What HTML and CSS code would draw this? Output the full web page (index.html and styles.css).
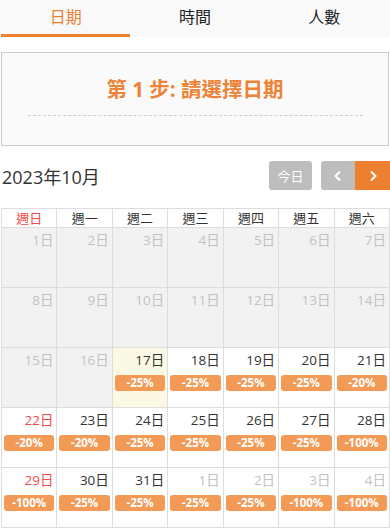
FILE: index.html
```html
<!DOCTYPE html>
<html lang="zh-Hant">
<head>
  <meta charset="UTF-8">
  <meta name="viewport" content="width=device-width, initial-scale=1.0">
  <title>預約 - 選擇日期</title>
  <link rel="stylesheet" href="styles.css">
</head>
<body>
  <!-- Step tabs -->
  <div class="tabs">
    <div class="tab active">日期</div>
    <div class="tab">時間</div>
    <div class="tab">人數</div>
  </div>

  <!-- Step title -->
  <div class="step-box">
    <h2 class="step-title">第 1 步: 請選擇日期</h2>
    <div class="step-line"></div>
  </div>

  <!-- Calendar toolbar -->
  <div class="cal-toolbar">
    <div class="cal-month">2023年10月</div>
    <div class="cal-buttons">
      <div class="btn btn-today">今日</div>
      <div class="btn-group">
        <div class="btn btn-prev">
          <svg width="10" height="12" viewBox="0 0 10 12"><path d="M7 1.5 L2.5 6 L7 10.5" fill="none" stroke="#fff" stroke-width="2"/></svg>
        </div>
        <div class="btn btn-next">
          <svg width="10" height="12" viewBox="0 0 10 12"><path d="M3 1.5 L7.5 6 L3 10.5" fill="none" stroke="#fff" stroke-width="2"/></svg>
        </div>
      </div>
    </div>
  </div>

  <!-- Calendar grid -->
  <table class="calendar">
    <thead>
      <tr>
        <th class="sun">週日</th><th>週一</th><th>週二</th><th>週三</th><th>週四</th><th>週五</th><th>週六</th>
      </tr>
    </thead>
    <tbody>
      <tr>
        <td class="past"><div class="day">1日</div></td>
        <td class="past"><div class="day">2日</div></td>
        <td class="past"><div class="day">3日</div></td>
        <td class="past"><div class="day">4日</div></td>
        <td class="past"><div class="day">5日</div></td>
        <td class="past"><div class="day">6日</div></td>
        <td class="past"><div class="day">7日</div></td>
      </tr>
      <tr>
        <td class="past"><div class="day">8日</div></td>
        <td class="past"><div class="day">9日</div></td>
        <td class="past"><div class="day">10日</div></td>
        <td class="past"><div class="day">11日</div></td>
        <td class="past"><div class="day">12日</div></td>
        <td class="past"><div class="day">13日</div></td>
        <td class="past"><div class="day">14日</div></td>
      </tr>
      <tr>
        <td class="past"><div class="day">15日</div></td>
        <td class="past"><div class="day">16日</div></td>
        <td class="today"><div class="day">17日</div><div class="badge">-25%</div></td>
        <td><div class="day">18日</div><div class="badge">-25%</div></td>
        <td><div class="day">19日</div><div class="badge">-25%</div></td>
        <td><div class="day">20日</div><div class="badge">-25%</div></td>
        <td><div class="day">21日</div><div class="badge">-20%</div></td>
      </tr>
      <tr>
        <td class="sun"><div class="day">22日</div><div class="badge">-20%</div></td>
        <td><div class="day">23日</div><div class="badge">-20%</div></td>
        <td><div class="day">24日</div><div class="badge">-25%</div></td>
        <td><div class="day">25日</div><div class="badge">-25%</div></td>
        <td><div class="day">26日</div><div class="badge">-25%</div></td>
        <td><div class="day">27日</div><div class="badge">-25%</div></td>
        <td><div class="day">28日</div><div class="badge">-100%</div></td>
      </tr>
      <tr>
        <td class="sun"><div class="day">29日</div><div class="badge">-100%</div></td>
        <td><div class="day">30日</div><div class="badge">-25%</div></td>
        <td><div class="day">31日</div><div class="badge">-25%</div></td>
        <td class="other"><div class="day">1日</div><div class="badge">-25%</div></td>
        <td class="other"><div class="day">2日</div><div class="badge">-25%</div></td>
        <td class="other"><div class="day">3日</div><div class="badge">-100%</div></td>
        <td class="other"><div class="day">4日</div><div class="badge">-100%</div></td>
      </tr>
    </tbody>
  </table>
</body>
</html>
```

FILE: styles.css
```css
/* Base */
* {
  box-sizing: border-box;
  margin: 0;
  padding: 0;
}

body {
  font-family: 'Open Sans', 'Noto Sans CJK TC', sans-serif;
  color: #333;
  background: #fff;
}

/* Step tabs */
.tabs {
  display: flex;
  padding: 0 1px;
  background: #f9f9f9;
}

.tab {
  flex: 1;
  height: 37px;
  line-height: 34px;
  text-align: center;
  font-size: 16px;
  color: #222;
  border-bottom: 3px solid transparent;
}

.tab.active {
  color: #ed7f30;
  border-bottom-color: #ed7f30;
}

/* Step title box */
.step-box {
  margin: 15px 1px 0;
  height: 94px;
  border: 1px solid #ccc;
  background: #fafafa;
  padding-top: 22px;
}

.step-title {
  font-size: 20.5px;
  font-weight: 700;
  color: #ed8336;
  text-align: center;
  line-height: 28px;
}

.step-line {
  margin: 12px 25px 0 26px;
  border-top: 1px dashed #ccc;
}

/* Toolbar */
.cal-toolbar {
  display: flex;
  justify-content: space-between;
  align-items: center;
  margin-top: 15px;
  padding-left: 2px;
}

.cal-month {
  font-size: 18px;
  color: #333;
}

.cal-buttons {
  display: flex;
  gap: 9px;
}

.btn-group {
  display: flex;
}

.btn {
  height: 29px;
  display: flex;
  align-items: center;
  justify-content: center;
  color: #fff;
  font-size: 13px;
  background: #bdbdbd;
}

.btn-today {
  width: 43px;
  border-radius: 3px;
}

.btn-prev {
  width: 34px;
  border-radius: 3px 0 0 3px;
}

.btn-next {
  width: 35px;
  background: #ed7f30;
}

/* Calendar grid */
.calendar {
  width: 389px;
  margin: 18px 0 0 1px;
  border-collapse: collapse;
  table-layout: fixed;
}

.calendar th {
  height: 19px;
  font-size: 13px;
  font-weight: 400;
  color: #333;
  border: 1px solid #ddd;
  line-height: 16px;
}

.calendar th.sun {
  color: #f24b4b;
}

.calendar td {
  height: 60px;
  border: 1px solid #ddd;
  vertical-align: top;
  padding: 0 2px;
}

.day {
  text-align: right;
  font-size: 13.5px;
  line-height: 18px;
  padding: 3px 1px 0 0;
  color: #333;
}

.badge {
  margin-top: 6px;
  height: 16px;
  line-height: 16px;
  border-radius: 3px;
  background: #f49a57;
  color: #fff;
  font-size: 11.5px;
  font-weight: 700;
  text-align: center;
}

td.past {
  background: #f2f2f2;
}

td.past .day,
td.other .day {
  color: #c2c2c2;
}

td.sun .day {
  color: #f24b4b;
}

td.today {
  background: #fbf8e4;
}
```
